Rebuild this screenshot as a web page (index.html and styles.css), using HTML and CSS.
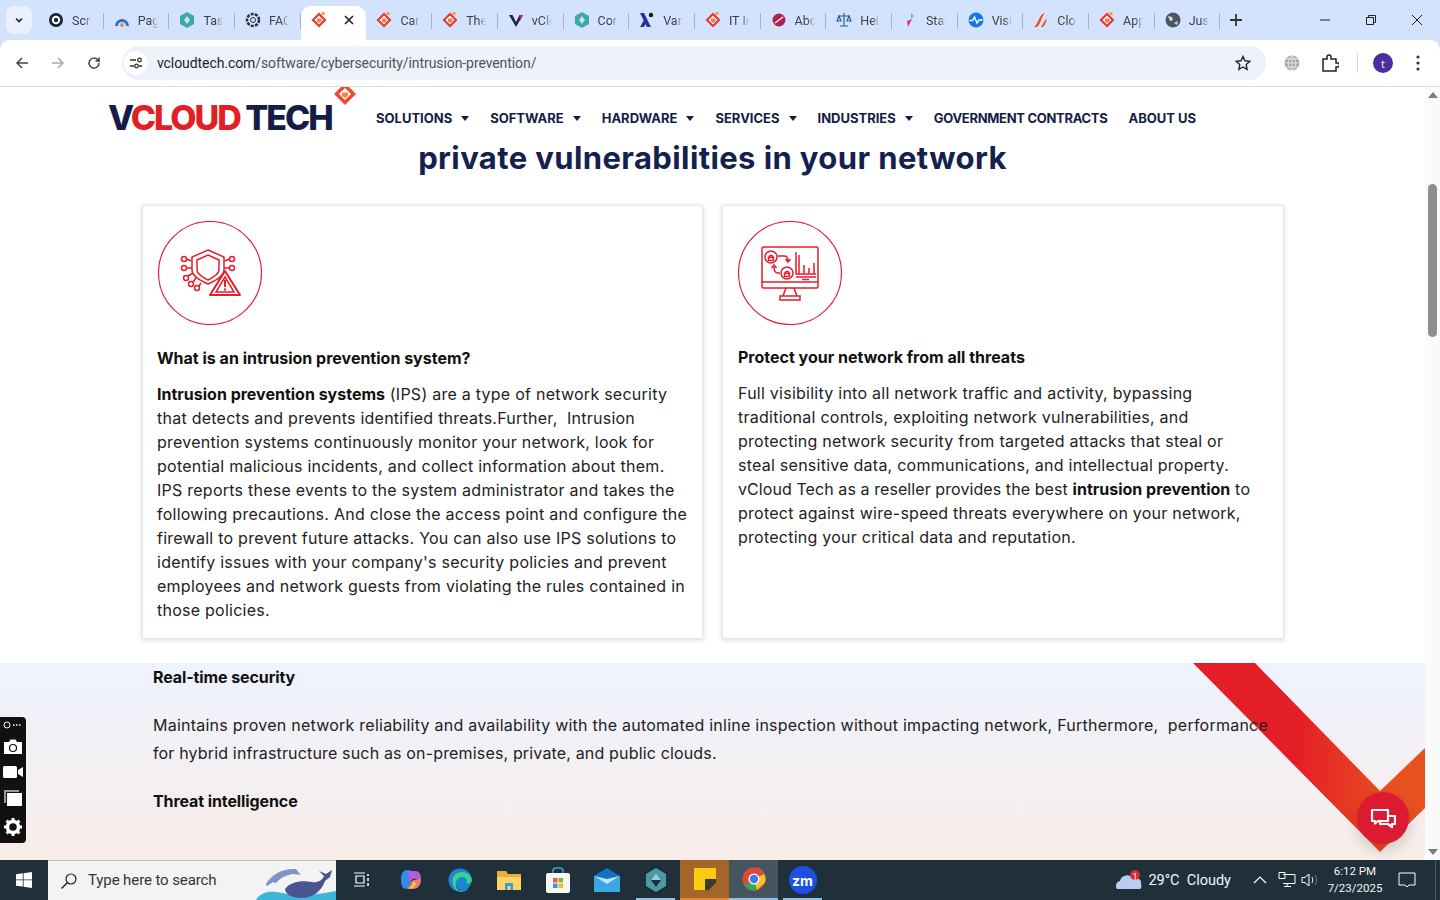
FILE: index.html
```html
<!DOCTYPE html>
<html lang="en">
<head>
<meta charset="utf-8">
<title>Intrusion Prevention - vCloud Tech</title>
<link rel="stylesheet" href="styles.css">
</head>
<body>
<svg class="defs" width="0" height="0" aria-hidden="true">
  <symbol id="vc" viewBox="0 0 16 16"><path d="M8 .5 15.500 8 8 15.500.5 8z" fill="#e8333a"/><path d="M8 3.500 12.500 8 8 12.500 3.500 8z" fill="#fff"/><path d="M6 6.500h4.500v3L8 11 6 9.500z" fill="#e8833a"/><rect x="10.500" y="0" width="3" height="3" fill="#f2a03c"/></symbol>
  <symbol id="teal" viewBox="0 0 16 16"><path d="M8 0 15 4v8l-7 4-7-4V4z" fill="#3ea6ad"/><path d="M8 4 11 8 8 12 5 8z" fill="#bfe7e8"/></symbol>
</svg>

<div class="tabstrip">
  <button class="tabsearch"><svg width="10" height="10" viewBox="0 0 10 10"><path d="M2 3.500 5 6.500 8 3.500" fill="none" stroke="#1f1f1f" stroke-width="1.600"/></svg></button>
  <div class="tabs">
    <div class="tab"><svg class="fav" viewBox="0 0 16 16"><circle cx="8" cy="8" r="7" fill="#1d2433"/><circle cx="8" cy="8" r="4.200" fill="#fff"/><circle cx="8" cy="8" r="2.200" fill="#1d2433"/></svg><span class="tl">Scr</span></div>
    <div class="tab"><svg class="fav" viewBox="0 0 16 16"><path d="M1 14a7 7 0 0 1 14 0h-3a4 4 0 0 0-8 0z" fill="#2f6fd0"/><circle cx="8" cy="13" r="2" fill="#f08a3c"/></svg><span class="tl">Pag</span></div>
    <div class="tab"><svg class="fav"><use href="#teal"/></svg><span class="tl">Tasl</span></div>
    <div class="tab"><svg class="fav" viewBox="0 0 16 16"><circle cx="8" cy="8" r="6" fill="none" stroke="#2a2f3a" stroke-width="2.500" stroke-dasharray="3 1.200"/><circle cx="8" cy="8" r="2.500" fill="none" stroke="#2a2f3a"/></svg><span class="tl">FAC</span></div>
    <div class="tab active"><svg class="fav"><use href="#vc"/></svg><svg class="tabx" width="10" height="10" viewBox="0 0 10 10"><path d="M1 1 9 9M9 1 1 9" stroke="#1f1f1f" stroke-width="1.600"/></svg></div>
    <div class="tab"><svg class="fav"><use href="#vc"/></svg><span class="tl">Car</span></div>
    <div class="tab"><svg class="fav"><use href="#vc"/></svg><span class="tl">The</span></div>
    <div class="tab"><svg class="fav" viewBox="0 0 16 16"><path d="M1 3h3.500L8 10l3.500-7H15L8 15z" fill="#1e2350"/><path d="M11.500 3H15l-3 6z" fill="#d9242f"/></svg><span class="tl">vClc</span></div>
    <div class="tab"><svg class="fav"><use href="#teal"/></svg><span class="tl">Cor</span></div>
    <div class="tab"><svg class="fav" viewBox="0 0 16 16"><path d="M1 1h4l7 14H8zM1 15l4-7 2 3-2 4z" fill="#2430a8"/><circle cx="12" cy="3" r="2.200" fill="#16191f"/></svg><span class="tl">Vari</span></div>
    <div class="tab"><svg class="fav"><use href="#vc"/></svg><span class="tl">IT Ir</span></div>
    <div class="tab"><svg class="fav" viewBox="0 0 16 16"><circle cx="8" cy="8" r="6.500" fill="#b3204e"/><path d="M4 11 12 5" stroke="#fff" stroke-width="1.400"/></svg><span class="tl">Abc</span></div>
    <div class="tab"><svg class="fav" viewBox="0 0 16 16"><path d="M8 1v13M4 14h8M2 4h12M3 4 1 9h4zM13 4l-2 5h4z" fill="none" stroke="#2c5f88" stroke-width="1.200"/></svg><span class="tl">Hei</span></div>
    <div class="tab"><svg class="fav" viewBox="0 0 16 16"><path d="M9 1l3 3-3 3z" fill="#4fcfb0"/><path d="M10 7 6 15 5 9z" fill="#e0356a"/></svg><span class="tl">Stat</span></div>
    <div class="tab"><svg class="fav" viewBox="0 0 16 16"><circle cx="8" cy="8" r="7.500" fill="#1677e6"/><path d="M1.500 8.500h3L6.500 5l2.500 6 2-3h3.500" fill="none" stroke="#fff" stroke-width="1.400"/></svg><span class="tl">Visi</span></div>
    <div class="tab"><svg class="fav" viewBox="0 0 16 16"><path d="M1 15C5 13 6 2 12 1 8 5 8 12 4 15zM8 15c2-2 3-7 6-8-1 3-2 6-4 8z" fill="#e8501e"/></svg><span class="tl">Clo</span></div>
    <div class="tab"><svg class="fav"><use href="#vc"/></svg><span class="tl">App</span></div>
    <div class="tab"><svg class="fav" viewBox="0 0 16 16"><circle cx="8" cy="8" r="7.500" fill="#4c5560"/><path d="M3 4l4 1 1 3-3 1zM9 11l4-2-1 4z" fill="#d5dbe2"/></svg><span class="tl">Just</span></div>
    <button class="newtab"><svg width="12" height="12" viewBox="0 0 12 12"><path d="M6 0v12M0 6h12" stroke="#333" stroke-width="1.800"/></svg></button>
  </div>
  <div class="winctl">
    <svg width="12" height="12" viewBox="0 0 12 12"><path d="M1 6h10" stroke="#222"/></svg>
    <svg width="12" height="12" viewBox="0 0 12 12"><path d="M1.500 3.500h7v7h-7zM3.500 3.500v-2h7v7h-2" fill="none" stroke="#222"/></svg>
    <svg width="12" height="12" viewBox="0 0 12 12"><path d="M1 1 11 11M11 1 1 11" stroke="#222"/></svg>
  </div>
</div>

<div class="toolbar">
  <svg class="tbi" viewBox="0 0 16 16"><path d="M14 8H3M8 3 3 8l5 5" fill="none" stroke="#444" stroke-width="1.500"/></svg>
  <svg class="tbi" viewBox="0 0 16 16"><path d="M2 8h11M8 3l5 5-5 5" fill="none" stroke="#a8a8a8" stroke-width="1.500"/></svg>
  <svg class="tbi" viewBox="0 0 16 16"><path d="M13 8a5 5 0 1 1-1.500-3.500L13 6V2.500M13 6H9.500" fill="none" stroke="#444" stroke-width="1.500"/></svg>
  <div class="omnibox">
    <span class="sitebtn"><svg width="14" height="14" viewBox="0 0 14 14"><path d="M1 4h6M10 10h3M1 10h4" stroke="#333" stroke-width="1.300"/><circle cx="10.500" cy="4" r="1.800" fill="none" stroke="#333" stroke-width="1.300"/><circle cx="7.500" cy="10" r="1.800" fill="none" stroke="#333" stroke-width="1.300"/></svg></span>
    <span class="url">vcloudtech.com<span class="urlpath">/software/cybersecurity/intrusion-prevention/</span></span>
    <svg class="star" width="16" height="16" viewBox="0 0 16 16"><path d="M8 1.500l2 4.300 4.700.6-3.500 3.200.9 4.700L8 12l-4.100 2.300.9-4.700L1.300 6.400 6 5.800z" fill="none" stroke="#222" stroke-width="1.400"/></svg>
  </div>
  <div class="tbright">
    <svg width="18" height="18" viewBox="0 0 18 18"><circle cx="9" cy="9" r="7.500" fill="#a4a8ad"/><path d="M1.500 9h15M9 1.500v15M3 5h12M3 13h12M9 1.500c-5 4-5 11 0 15 5-4 5-11 0-15" fill="none" stroke="#f0f0f0" stroke-width=".8"/></svg>
    <svg width="18" height="18" viewBox="0 0 18 18"><path d="M2 5h4V3a2 2 0 0 1 4 0v2h5v4h1.500a2 2 0 0 1 0 4H15v4H2z" fill="none" stroke="#222" stroke-width="1.500"/></svg>
    <span class="tbdiv"></span>
    <span class="avatar">t</span>
    <svg width="4" height="16" viewBox="0 0 4 16"><circle cx="2" cy="2" r="1.600" fill="#333"/><circle cx="2" cy="8" r="1.600" fill="#333"/><circle cx="2" cy="14" r="1.600" fill="#333"/></svg>
  </div>
</div>

<div class="viewport">
  <main class="page">
    <header class="sitehead">
      <div class="logo">
        <span class="logotext"><span class="navy">V</span><span class="red">CLOUD</span> <span class="navy">TECH</span></span>
        <svg class="logomark" width="26" height="26" viewBox="0 0 26 26"><path d="M12 3 23 14 12 25 1 14z" fill="#ea4a3a"/><path d="M12 8 18 14 12 20 6 14z" fill="#fff"/><path d="M9 12.500h6v3.500l-3 2-3-2z" fill="#ee8a3c"/><rect x="17" y="1" width="3" height="3" fill="#f0a050"/><rect x="21" y="4" width="2" height="2" fill="#f0a050"/></svg>
      </div>
      <nav class="nav">
        <a class="navitem">SOLUTIONS<i class="caret"></i></a>
        <a class="navitem">SOFTWARE<i class="caret"></i></a>
        <a class="navitem">HARDWARE<i class="caret"></i></a>
        <a class="navitem">SERVICES<i class="caret"></i></a>
        <a class="navitem">INDUSTRIES<i class="caret"></i></a>
        <a class="navitem gov">GOVERNMENT CONTRACTS</a>
        <a class="navitem">ABOUT US</a>
      </nav>
    </header>

    <h2 class="title">private vulnerabilities in your network</h2>

    <div class="cards">
      <article class="card first">
        <svg class="cardicon" viewBox="0 0 104 104" fill="none" stroke="#e31e2d">
          <circle cx="52" cy="52" r="51.500" stroke-width="1.200"/>
          <g stroke-width="1.500">
            <path d="M50 29 66 36v13c0 6-7 10-16 14-9-4-16-8-16-14V36z"/>
            <path d="M50 34 61 39v10c0 4-5 7-11 10-6-3-11-6-11-10V39z"/>
            <path d="M67 50 82 74H52z" fill="#fff" stroke-width="2" stroke-linejoin="round"/>
            <path d="M67 56 76 71H58z"/>
            <path d="M67 59v7M67 67.500v2" stroke-width="2"/>
            <circle cx="26" cy="38" r="2.500"/><circle cx="26" cy="47" r="2.500"/><circle cx="28" cy="57" r="2.500"/><circle cx="33" cy="63" r="2.500"/><circle cx="39" cy="67" r="2.500"/>
            <circle cx="74" cy="38" r="2.500"/><circle cx="74" cy="47" r="2.500"/>
            <path d="M28.500 38l5 2M28.500 47H34M30 55l5-3M35 61l3-4M41 65l2-3M71.500 38l-5 2M71.500 47H66"/>
          </g>
        </svg>
        <h3 class="cardhead">What is an intrusion prevention system?</h3>
        <p class="cardtext"><b>Intrusion prevention systems</b> (IPS) are a type of network security<br>that detects and prevents identified threats.Further,&nbsp; Intrusion<br>prevention systems continuously monitor your network, look for<br>potential malicious incidents, and collect information about them.<br>IPS reports these events to the system administrator and takes the<br>following precautions. And close the access point and configure the<br>firewall to prevent future attacks. You can also use IPS solutions to<br>identify issues with your company's security policies and prevent<br>employees and network guests from violating the rules contained in<br>those policies.</p>
      </article>
      <article class="card">
        <svg class="cardicon" viewBox="0 0 104 104" fill="none" stroke="#e31e2d">
          <circle cx="52" cy="52" r="51.500" stroke-width="1.200"/>
          <g stroke-width="1.500">
            <rect x="24" y="26" width="56" height="41" rx="1.500"/>
            <path d="M24 61h56M48 67l-3 8M56 67l3 8M42 75h20v4H42z"/>
            <circle cx="33" cy="36" r="6"/><circle cx="49" cy="52" r="6"/>
            <path d="M30.500 39.500v-3h5v3zM46.500 55.500v-3h5v3zM31 36.500a2 2 0 1 1 4 0M47 52.500a2 2 0 1 1 4 0"/>
            <path d="M40 35h6c3 0 4 2 4 5M47.500 38l2.500 3 2.500-3M42 52h-2c-3 0-4-2-4-6M33.500 47l2.500-3 2.500 3"/>
            <path d="M58 31v22h20M61 53V34M66 53v-9M71 53v-6M76 53v-11M58 56h20M64 58.500h7"/>
          </g>
        </svg>
        <h3 class="cardhead alt">Protect your network from all threats</h3>
        <p class="cardtext">Full visibility into all network traffic and activity, bypassing<br>traditional controls, exploiting network vulnerabilities, and<br>protecting network security from targeted attacks that steal or<br>steal sensitive data, communications, and intellectual property.<br><span class="tight">vCloud Tech as a reseller provides the best</span> <b>intrusion prevention</b> to<br>protect against wire-speed threats everywhere on your network,<br>protecting your critical data and reputation.</p>
      </article>
    </div>

    <section class="band">
      <svg class="ribbon" width="232" height="189" viewBox="0 0 232 189">
        <defs><linearGradient id="rg" x1="0" y1="0" x2="1" y2="0"><stop offset=".45" stop-color="#e41e26"/><stop offset=".85" stop-color="#e8501f"/></linearGradient></defs>
        <path d="M0 0H62L187 128 232 85V145L187 189z" fill="url(#rg)"/>
      </svg>
      <div class="bandbody">
        <h4 class="bandhead">Real-time security</h4>
        <p class="bandtext">Maintains proven network reliability and availability with the automated inline inspection without impacting network, Furthermore,&nbsp; performance<br><span class="bandline">for hybrid infrastructure such as on-premises, private, and public clouds.</span></p>
        <h4 class="bandhead second">Threat intelligence</h4>
      </div>
    </section>
  </main>

  <div class="scrollbar">
    <i class="arrow up"></i>
    <div class="thumbtrack"><div class="thumb"></div></div>
    <i class="arrow down"></i>
  </div>

  <aside class="sidetool">
    <svg width="20" height="8" viewBox="0 0 20 8"><circle cx="4" cy="4" r="3" fill="none" stroke="#fff"/><path d="M10 4h1.500M13 4h1.500M16 4h1.500" stroke="#fff" stroke-width="1.500"/></svg>
    <svg width="20" height="16" viewBox="0 0 20 16"><path d="M1 3h5l1.500-2.500h5L14 3h5v12H1z" fill="#fff"/><circle cx="10" cy="9" r="3.500" fill="#fff" stroke="#111" stroke-width="1.200"/></svg>
    <svg width="20" height="14" viewBox="0 0 20 14"><rect y="1" width="14" height="12" rx="1.500" fill="#fff"/><path d="M15 5l5-3v10l-5-3z" fill="#fff"/></svg>
    <svg width="20" height="18" viewBox="0 0 20 18"><path d="M1 1h15v2H3v11H1z" fill="#999"/><rect x="4" y="4" width="15" height="13" fill="#fff"/></svg>
    <svg width="20" height="20" viewBox="0 0 20 20"><circle cx="10" cy="10" r="5.500" fill="none" stroke="#fff" stroke-width="3.500"/><path d="M10 1v3.500M10 15.500V19M1 10h3.500M15.500 10H19M3.600 3.600 6 6M14 14l2.400 2.400M3.600 16.400 6 14M14 6l2.400-2.400" stroke="#fff" stroke-width="3"/></svg>
  </aside>

  <button class="chat">
    <svg width="26" height="21" viewBox="0 0 26 21" fill="none" stroke="#fff" stroke-width="2.200" stroke-linejoin="round"><path d="M2 2h16v11H8l-3 2.500V13H2z"/><path d="M10 13v3h8l4 3v-3h3V8h-7"/></svg>
  </button>
</div>

<footer class="taskbar">
  <div class="start"><svg width="16" height="16" viewBox="0 0 16 16"><path d="M0 2.300 6.800 1.300v6.200H0zM7.600 1.200 16 0v7.500H7.600zM0 8.300h6.800v6.300L0 13.700zM7.600 8.300H16V16l-8.400-1.200z" fill="#fff"/></svg></div>
  <div class="search">
    <svg width="18" height="18" viewBox="0 0 18 18"><circle cx="11" cy="7" r="5" fill="none" stroke="#222" stroke-width="1.200"/><path d="M7.500 10.500 1.500 16.500" stroke="#222" stroke-width="1.400"/></svg>
    <span class="searchtext">Type here to search</span>
    <svg class="whale" width="80" height="40" viewBox="0 0 80 40"><path d="M0 40c4-7 12-9 20-8 14 2 26 6 60-1v9z" fill="#3cb6d8"/><path d="M10 24c5-9 16-16 30-15l3 4 2 2-8-1c-7 1-13 4-17 9l-3-1-6 4c-1-1-1-1-1-2z" fill="#7f93c8"/><path d="M29 29c5-7 16-9 27-7 5 1 10-1 12-6l-5-5 7 3 6-4-2 7-5 4c-3 9-11 17-24 17-9 0-16-4-16-9z" fill="#4a5490"/></svg>
  </div>
  <div class="tasks">
    <span class="task"><svg width="18" height="18" viewBox="0 0 18 18"><path d="M1 2h11M1 15h11M3 5h8v7H3z" fill="none" stroke="#fff" stroke-width="1.200"/><path d="M15 3v2M15 7v3M15 12v3" stroke="#fff" stroke-width="1.500"/></svg></span>
    <span class="task"><svg width="24" height="24" viewBox="0 0 24 24"><path d="M8 2c-4 0-6 4-6 9s1 10 5 10c3 0 4-3 5-8l2-7c1-3-3-4-6-4z" fill="#2f8ce8"/><path d="M9 3h7c4 0 6 3 6 8-3 1-5-1-8 0-2 1-2 3-3 4-1-4-2-9-2-12z" fill="#b45cdb"/><path d="M12 14c3-3 7-3 10-3 0 6-3 10-8 10-3 0-5 0-6-1 2-1 3-3 4-6z" fill="#ef7d6d"/><path d="M9 21c3-2 5-5 5-8l3 2c0 3-3 6-8 6z" fill="#f5c24c"/></svg></span>
    <span class="task"><svg width="24" height="24" viewBox="0 0 24 24"><circle cx="12" cy="12" r="11.500" fill="#1b86d6"/><path d="M5 9c4-7 17-7 19 3 0 3-3 4-6 3 2-3 0-6-4-6-3 0-7 3-6 8 1 4 7 7 12 4-6 6-18 2-15-12z" fill="#39d28a"/><path d="M8 17c1 4 7 7 12 4-6 4-13 1-12-4" fill="#0d5ba8"/></svg></span>
    <span class="task"><svg width="24" height="22" viewBox="0 0 24 22"><path d="M0 2h9l2 3h13v16H0z" fill="#e8b23a"/><path d="M0 8h24v13H0z" fill="#ffd562"/><path d="M8 14h8v7h-2.500v-4h-3v4H8z" fill="#3b9ad9"/></svg></span>
    <span class="task"><svg width="24" height="26" viewBox="0 0 24 26"><path d="M7 7V4a3 3 0 0 1 3-3h4a3 3 0 0 1 3 3v3" fill="none" stroke="#3aa4dd" stroke-width="1.600"/><rect y="6" width="24" height="20" rx="2" fill="#f6f6f6"/><rect x="7" y="11" width="4.500" height="4.500" fill="#ef5a35"/><rect x="12.500" y="11" width="4.500" height="4.500" fill="#7fbb3a"/><rect x="7" y="16.500" width="4.500" height="4.500" fill="#2a9de0"/><rect x="12.500" y="16.500" width="4.500" height="4.500" fill="#f5b91e"/></svg></span>
    <span class="task"><svg width="26" height="24" viewBox="0 0 26 24"><path d="M0 8 13 0l13 8v16H0z" fill="#1274c4"/><path d="M0 8l13 8 13-8v16H0z" fill="#39a7e6"/><path d="M0 8l13 8 13-8-13 3z" fill="#bfe3f7"/></svg></span>
    <span class="task run"><svg width="24" height="24" viewBox="0 0 24 24"><path d="M12 0 22 6v12l-10 6-10-6V6z" fill="#4b9aa6"/><path d="M12 5 17 12 12 19 7 12z" fill="#16303c"/><path d="M12 5 17 12H7z" fill="#8fd2d8"/></svg></span>
    <span class="task lit"><svg width="24" height="24" viewBox="0 0 24 24"><path d="M1 1h22v15l-7 7H1z" fill="#fdcb10"/><path d="M23 12H12v11h4l7-7z" fill="#3a3a2a"/></svg></span>
    <span class="task lit2"><svg width="24" height="24" viewBox="0 0 24 24"><circle cx="12" cy="12" r="11.500" fill="#e2483a"/><path d="M12 12 2 18a11.500 11.500 0 0 0 13 5z" fill="#39a651"/><path d="M12 .5a11.500 11.500 0 0 1 11 15L15 23l-3-11 10.500-5A11 11 0 0 0 12 .5z" fill="#f7c32e"/><circle cx="12" cy="12" r="5.500" fill="#fff"/><circle cx="12" cy="12" r="4.200" fill="#3b7de6"/></svg></span>
    <span class="task run"><span class="zm">zm</span></span>
  </div>
  <div class="tray">
    <span class="weather">
      <svg width="26" height="20" viewBox="0 0 26 20"><path d="M1 19a5 5 0 0 1 3-8 7 7 0 0 1 13-2 5 5 0 0 1 8 5c1 3 0 5-1 5z" fill="#b9cdf2"/><circle cx="19" cy="5" r="5" fill="#d32f2f"/></svg>
      <span class="badge1">1</span>
    </span>
    <span class="traytext">29°C&nbsp; Cloudy</span>
    <svg class="caretup" width="14" height="8" viewBox="0 0 14 8"><path d="M1 7 7 1l6 6" fill="none" stroke="#fff" stroke-width="1.200"/></svg>
    <svg class="trayicon" width="18" height="16" viewBox="0 0 18 16"><path d="M5 2.500h12v9H5M1 .5h6v6H1zM9 11.500v3M6 14.500h7" fill="none" stroke="#fff"/></svg>
    <svg class="trayicon" width="18" height="16" viewBox="0 0 18 16"><path d="M1 5.500h3L8 2v12l-4-3.500H1zM11 5c1 2 1 4 0 6" fill="none" stroke="#fff"/><path d="M14 3c2 3 2 7 0 10" fill="none" stroke="#777"/></svg>
    <span class="clock"><span>6:12 PM</span><span>7/23/2025</span></span>
    <svg class="notif" width="18" height="18" viewBox="0 0 18 18"><path d="M1 2h16v12h-6l-2 2-2-2H1z" fill="none" stroke="#fff"/></svg>
    <span class="showdesk"></span>
  </div>
</footer>
</body>
</html>
```
FILE: styles.css
```css
* { box-sizing: border-box; }
html, body { margin: 0; height: 900px; overflow: hidden; }
body { display: flex; flex-direction: column; width: 1440px; font-family: "Inter", "Liberation Sans", sans-serif; background: #d3e3fd; }
.defs { position: absolute; }
button { border: 0; background: none; padding: 0; }

.tabstrip { height: 40px; background: #d3e3fd; display: flex; align-items: center; flex: none; }
.tabsearch { width: 26px; height: 28px; margin-left: 6px; margin-right: 6px; background: #e9f0fc; border-radius: 8px; display: flex; align-items: center; justify-content: center; }
.tabs { display: flex; align-items: center; height: 40px; flex: 1; }
.tab { width: 65.7px; height: 40px; padding: 0 0 0 10px; display: flex; align-items: center; gap: 8px; position: relative; flex: none; }
.tab::after { content: ""; position: absolute; right: 0; top: 13px; width: 1px; height: 16px; background: #9fb3cc; }
.tab.active { background: #fff; border-radius: 10px 10px 0 0; height: 34px; margin-top: 6px; padding-bottom: 6px; gap: 17px; }
.tab.active::after { display: none; }
.fav { width: 16px; height: 16px; flex: none; }
.tl { font: 12.5px "Roboto", "Liberation Sans", sans-serif; color: #3c4043; width: 20px; overflow: hidden; white-space: nowrap; -webkit-mask-image: linear-gradient(90deg, #000 60%, transparent 100%); mask-image: linear-gradient(90deg, #000 60%, transparent 100%); }
.newtab { width: 32px; height: 28px; display: flex; align-items: center; justify-content: center; }
.winctl { display: flex; gap: 34px; align-items: center; margin-right: 17px; flex: none; }

.toolbar { height: 47px; flex: none; background: #fff; border-bottom: 1px solid #dcdfe3; display: flex; align-items: center; padding: 0 14px; border-radius: 10px 10px 0 0; }
.tbi { width: 16px; height: 16px; margin-right: 20px; flex: none; }
.omnibox { width: 1144px; height: 34px; margin-left: 0; background: #edf2fa; border-radius: 17px; display: flex; align-items: center; padding: 0 15px 0 2px; flex: none; }
.sitebtn { width: 24px; height: 24px; border-radius: 50%; background: #fff; display: flex; align-items: center; justify-content: center; margin-right: 9px; }
.url { font: 14px "Roboto", "Liberation Sans", sans-serif; color: #1f1f1f; flex: 1; letter-spacing: -.08px; }
.urlpath { color: #4f5358; }
.star { flex: none; }
.tbright { display: flex; align-items: center; margin-left: 17px; gap: 20px; }
.tbdiv { width: 1px; height: 20px; background: #d8d8d8; margin: 0 -5px 0 -2px; }
.avatar { width: 20px; height: 20px; border-radius: 50%; background: #4a2ea0; color: #fff; font: 11px "Open Sans", sans-serif; display: flex; align-items: center; justify-content: center; margin-right: 3px; }

.viewport { height: 773px; flex: none; position: relative; overflow: hidden; display: flex; background: #fff; }
.page { width: 1425px; flex: none; display: flex; flex-direction: column; }

.sitehead { height: 53px; display: flex; align-items: center; padding-left: 108px; flex: none; }
.logo { width: 268px; position: relative; flex: none; margin-top: 9px; }
.logotext { font: 800 34px "Inter", sans-serif; letter-spacing: -2px; display: block; line-height: 34px; white-space: nowrap; }
.navy { color: #141c48; }
.red { color: #e31e26; }
.logomark { position: absolute; left: 225px; top: -21px; }
.nav { display: flex; align-items: center; gap: 21px; margin-top: 9px; }
.navitem { font: 700 13px "Inter", sans-serif; color: #141c48; display: flex; align-items: center; white-space: nowrap; }
.navitem.gov { letter-spacing: -.3px; }
.caret { width: 0; height: 0; border-left: 4.500px solid transparent; border-right: 4.500px solid transparent; border-top: 5px solid #141c48; margin-left: 9px; }

.title { margin: -1px 0 0; padding-top: 1px; text-align: center; font: 700 31px/36px "Inter", sans-serif; color: #14214d; height: 48px; letter-spacing: .4px; }
.cards { display: grid; grid-template-columns: 561px 562px; gap: 19px; padding: 18px 0 0 142px; flex: none; height: 476px; align-items: start; }
.card { height: 434px; background: #fff; border: 1px solid #e6e6e6; box-shadow: 0 1px 5px rgba(0,0,0,.16); padding: 15px 14px 15px 15px; }
.card.first .cardhead, .card.first .cardtext { margin-left: -1px; }
.cardicon { width: 104px; height: 104px; display: block; }
.cardhead { margin: 23px 0 0; font: 700 16px/20px "Inter", sans-serif; color: #111; }
.cardhead.alt { margin-top: 22px; }
.cardtext { margin: 14px 0 0; font: 400 16px/24px "Inter", sans-serif; color: #222; white-space: nowrap; letter-spacing: .25px; }
.cardtext b { color: #111; font-weight: 700; letter-spacing: 0; }
.cardtext .tight { letter-spacing: .08px; }

.band { flex: 1; position: relative; background: linear-gradient(180deg, #eef3fd 0%, #f7ede9 100%); overflow: hidden; }
.ribbon { position: absolute; left: 1193px; top: 0; }
.bandbody { position: relative; padding: 4px 0 0 153px; }
.bandhead { margin: 0; font: 700 16px/20px "Inter", sans-serif; color: #111; letter-spacing: -.1px; }
.bandhead.second { margin-top: 24px; }
.bandtext { margin: 24px 0 0; font: 400 16px/28px "Inter", sans-serif; color: #222; white-space: nowrap; letter-spacing: .24px; }
.bandline { letter-spacing: .16px; }

.scrollbar { width: 15px; flex: none; background: #fafafa; display: flex; flex-direction: column; align-items: center; padding: 5px 0; }
.arrow { width: 0; height: 0; border-left: 5px solid transparent; border-right: 5px solid transparent; flex: none; }
.arrow.up { border-bottom: 6px solid #7c7c7c; }
.arrow.down { border-top: 6px solid #7c7c7c; }
.thumbtrack { flex: 1; width: 100%; padding-top: 86px; display: flex; justify-content: center; }
.thumb { width: 9px; height: 153px; background: #8d8d8d; border-radius: 5px; }

.sidetool { position: absolute; left: 0; top: 630px; width: 26px; height: 126px; background: #111; border-radius: 0 4px 4px 0; display: flex; flex-direction: column; align-items: center; justify-content: space-between; padding: 4px 0 6px 0; }
.chat { position: absolute; left: 1357px; top: 705px; width: 52px; height: 52px; border-radius: 50%; background: #dc1a32; display: flex; align-items: center; justify-content: center; box-shadow: 0 6px 14px rgba(0,0,0,.16); }

.taskbar { height: 40px; flex: none; background: #20303a; display: flex; align-items: center; color: #fff; }
.start { width: 48px; height: 40px; display: flex; align-items: center; justify-content: center; flex: none; }
.search { width: 288px; height: 40px; flex: none; background: #f3f3f3; border-top: 1px solid #bbb; display: flex; align-items: center; padding-left: 12px; gap: 10px; position: relative; overflow: hidden; }
.searchtext { font: 15px "Roboto", "Liberation Sans", sans-serif; color: #333; margin-top: -1px; letter-spacing: -.1px; }
.whale { position: absolute; right: 0; bottom: 0; }
.tasks { display: flex; align-items: center; height: 40px; margin-left: 1px; flex: none; }
.task { width: 49px; height: 40px; display: flex; align-items: center; justify-content: center; flex: none; position: relative; }
.task.run::after { content: ""; position: absolute; left: 5px; right: 5px; bottom: 0; height: 2px; background: #8fc4ea; }
.task.lit { background: #a3652a; border-bottom: 2px solid #e8862a; }
.task.lit2 { background: #45555f; border-bottom: 2px solid #8fc4ea; }
.zm { width: 28px; height: 28px; border-radius: 50%; background: #1f4fe0; color: #fff; font: 700 14px "Inter", sans-serif; display: flex; align-items: center; justify-content: center; }
.tray { margin-left: auto; display: flex; align-items: center; height: 40px; flex: none; }
.weather { position: relative; width: 26px; height: 20px; margin-right: 6px; }
.badge1 { position: absolute; left: 16px; top: 0; font: 9px "Open Sans", sans-serif; color: #fff; }
.traytext { font: 14.5px "Roboto", "Liberation Sans", sans-serif; color: #f4f4f4; margin-right: 22px; white-space: nowrap; }
.caretup { margin-right: 11px; }
.trayicon { margin-right: 5px; }
.clock { display: flex; flex-direction: column; align-items: center; font: 11.5px/17px "Roboto", "Liberation Sans", sans-serif; color: #f4f4f4; margin-left: -1px; width: 64px; }
.notif { margin-left: 11px; }
.showdesk { width: 1px; height: 40px; background: #4a5761; margin-left: 19px; margin-right: 4px; }
```
